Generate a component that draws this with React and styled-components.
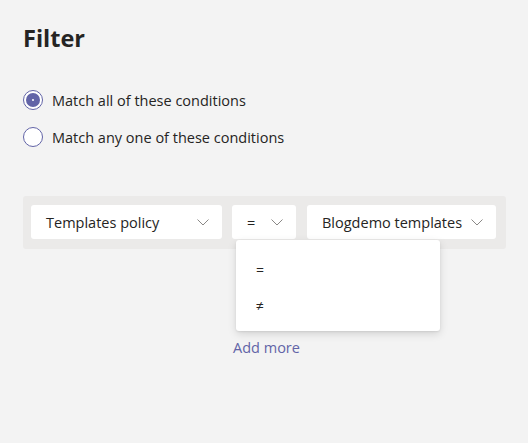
import React from "react"
import styled, { createGlobalStyle } from "styled-components"

const colours = {
  page: "#f3f3f3",
  well: "#ebeae9",
  text: "#252423",
  purple: "#6264a7",
  chevron: "#8a8886",
  white: "#ffffff",
}

const GlobalStyle = createGlobalStyle`
  html, body {
    margin: 0;
    padding: 0;
    background: ${colours.page};
  }
  body {
    font-family: "Open Sans", "Noto Sans", sans-serif;
    color: ${colours.text};
  }
`

const Page = styled.main`
  width: 528px;
  height: 443px;
  box-sizing: border-box;
  padding: 22px 22px 0 23px;
`

const Title = styled.h1`
  margin: 0;
  font-size: 23.5px;
  line-height: 32px;
  font-weight: 700;
  color: ${colours.text};
`

const RadioGroup = styled.div`
  display: flex;
  flex-direction: column;
  gap: 17px;
  margin-top: 36px;
`

const RadioRow = styled.label`
  display: flex;
  align-items: center;
  gap: 9px;
  height: 20px;
  font-size: 14.5px;
  cursor: pointer;
`

const RadioCircle = styled.span`
  position: relative;
  width: 20px;
  height: 20px;
  box-sizing: border-box;
  border-radius: 50%;
  border: 1px solid ${colours.purple};
  background: ${colours.white};
  flex-shrink: 0;

  ${({ checked }) =>
    checked &&
    `
    &::before {
      content: "";
      position: absolute;
      left: 2px;
      top: 2px;
      width: 14px;
      height: 14px;
      border-radius: 50%;
      background: ${colours.purple};
    }
    &::after {
      content: "";
      position: absolute;
      left: 8px;
      top: 8px;
      width: 2px;
      height: 2px;
      border-radius: 50%;
      background: ${colours.white};
    }
  `}
`

const ConditionWell = styled.div`
  display: flex;
  gap: 10px;
  margin-top: 49px;
  padding: 9px 10px 10px 8px;
  background: ${colours.well};
  border-radius: 3px;
`

const DropdownWrap = styled.div`
  position: relative;
  width: ${({ width }) => width}px;
  margin-left: ${({ shift }) => shift || 0}px;
`

const Dropdown = styled.button`
  display: flex;
  align-items: center;
  justify-content: space-between;
  width: 100%;
  height: 34px;
  box-sizing: border-box;
  padding: 0 13px 0 15px;
  border: none;
  border-radius: 3px;
  background: ${colours.white};
  font-family: inherit;
  font-size: 14.5px;
  color: ${colours.text};
  white-space: nowrap;
`

const Menu = styled.ul`
  position: absolute;
  left: 4px;
  top: 35px;
  width: 204px;
  margin: 0;
  padding: 11px 0 8px;
  list-style: none;
  background: ${colours.white};
  border-radius: 3px;
  box-shadow: 0 3px 8px rgba(0, 0, 0, 0.13), 0 1px 2px rgba(0, 0, 0, 0.08);
  z-index: 10;
`

const MenuItem = styled.li`
  height: 36px;
  display: flex;
  align-items: center;
  padding-left: 20px;
  font-size: 14px;
`

const AddMore = styled.a`
  display: block;
  width: fit-content;
  margin: 89px auto 0;
  font-size: 14.5px;
  line-height: 20px;
  color: ${colours.purple};
  text-decoration: none;
  transform: translateX(2px);
`

const Chevron = () => (
  <svg width="12" height="7" viewBox="0 0 12 7" fill="none">
    <path d="M0.5 0.5 L6 6 L11.5 0.5" stroke={colours.chevron} strokeWidth="1" />
  </svg>
)

const App = () => {
  return (
    <Page>
      <GlobalStyle />
      <Title>Filter</Title>
      <RadioGroup>
        <RadioRow>
          <RadioCircle checked />
          Match all of these conditions
        </RadioRow>
        <RadioRow>
          <RadioCircle />
          Match any one of these conditions
        </RadioRow>
      </RadioGroup>
      <ConditionWell>
        <DropdownWrap width={191}>
          <Dropdown>
            Templates policy
            <Chevron />
          </Dropdown>
        </DropdownWrap>
        <DropdownWrap width={64}>
          <Dropdown>
            =
            <Chevron />
          </Dropdown>
          <Menu>
            <MenuItem>=</MenuItem>
            <MenuItem>≠</MenuItem>
          </Menu>
        </DropdownWrap>
        <DropdownWrap width={189} shift={1}>
          <Dropdown>
            Blogdemo templates
            <Chevron />
          </Dropdown>
        </DropdownWrap>
      </ConditionWell>
      <AddMore href="#">Add more</AddMore>
    </Page>
  )
}

export default App
